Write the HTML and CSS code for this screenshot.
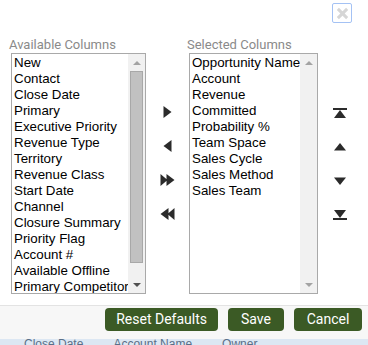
FILE: index.html
```html
<!DOCTYPE html>
<html lang="en">
<head>
  <meta charset="UTF-8">
  <title>Column Chooser</title>
  <link rel="stylesheet" href="styles.css">
</head>
<body>

<div class="dialog">
  <div class="dialog-top">
    <button class="close-btn" title="Close">
      <svg viewBox="0 0 14 14"><path d="M2 2L12 12M12 2L2 12"/></svg>
    </button>
  </div>

  <div class="chooser">
    <div class="col">
      <div class="col-label">Available Columns</div>
      <div class="listbox">
        <ul class="items">
          <li>New</li>
          <li>Contact</li>
          <li>Close Date</li>
          <li>Primary</li>
          <li>Executive Priority</li>
          <li>Revenue Type</li>
          <li>Territory</li>
          <li>Revenue Class</li>
          <li>Start Date</li>
          <li>Channel</li>
          <li>Closure Summary</li>
          <li>Priority Flag</li>
          <li>Account #</li>
          <li>Available Offline</li>
          <li>Primary Competitor</li>
        </ul>
        <div class="scrollbar">
          <div class="sb-btn"><span class="sb-up"></span></div>
          <div class="sb-track"><div class="sb-thumb"></div></div>
          <div class="sb-btn"><span class="sb-down"></span></div>
        </div>
      </div>
    </div>

    <div class="moves">
      <button class="icon-btn" title="Add">
        <svg class="tri" viewBox="0 0 9 12"><path d="M0.5 0L8.5 6L0.5 12Z"/></svg>
      </button>
      <button class="icon-btn" title="Remove">
        <svg class="tri" viewBox="0 0 9 12"><path d="M8.5 0L0.5 6L8.5 12Z"/></svg>
      </button>
      <button class="icon-btn" title="Add all">
        <svg class="dbl" viewBox="0 0 15 12"><path d="M0.5 0L7.5 6L0.5 12ZM6.5 0L14.5 6L6.5 12Z"/></svg>
      </button>
      <button class="icon-btn" title="Remove all">
        <svg class="dbl" viewBox="0 0 15 12"><path d="M14.5 0L7.5 6L14.5 12ZM8.5 0L0.5 6L8.5 12Z"/></svg>
      </button>
    </div>

    <div class="col">
      <div class="col-label">Selected Columns</div>
      <div class="listbox">
        <ul class="items">
          <li>Opportunity Name</li>
          <li>Account</li>
          <li>Revenue</li>
          <li>Committed</li>
          <li>Probability %</li>
          <li>Team Space</li>
          <li>Sales Cycle</li>
          <li>Sales Method</li>
          <li>Sales Team</li>
        </ul>
        <div class="scrollbar disabled">
          <div class="sb-btn"><span class="sb-up"></span></div>
          <div class="sb-track"></div>
          <div class="sb-btn"><span class="sb-down"></span></div>
        </div>
      </div>
    </div>

    <div class="moves order">
      <button class="icon-btn" title="Move to top">
        <svg class="bar" viewBox="0 0 14 10"><path d="M0 0H14V2H0ZM7 2L13 10H1Z"/></svg>
      </button>
      <button class="icon-btn" title="Move up">
        <svg class="bar" viewBox="0 0 14 10"><path d="M7 1L13 8.5H1Z"/></svg>
      </button>
      <button class="icon-btn" title="Move down">
        <svg class="bar" viewBox="0 0 14 10"><path d="M1 1.5H13L7 9Z"/></svg>
      </button>
      <button class="icon-btn" title="Move to bottom">
        <svg class="bar" viewBox="0 0 14 10"><path d="M1 0H13L7 8Z M0 8H14V10H0Z"/></svg>
      </button>
    </div>
  </div>

  <div class="dialog-footer">
    <button class="btn">Reset Defaults</button>
    <button class="btn">Save</button>
    <button class="btn">Cancel</button>
  </div>
</div>

<div class="behind">
  <span>Close Date</span><span>Account Name</span><span>Owner</span>
</div>

</body>
</html>
```

FILE: styles.css
```css
* {
  box-sizing: border-box;
}

body {
  margin: 0;
  width: 368px;
  height: 345px;
  overflow: hidden;
  background: #ffffff;
  font-family: Roboto, "Liberation Sans", Arial, sans-serif;
}

.dialog {
  background: #ffffff;
}

.dialog-top {
  height: 37px;
  display: flex;
  justify-content: flex-end;
  padding: 3px 16px 0 0;
}

.close-btn {
  width: 20px;
  height: 20px;
  padding: 0;
  border: 1px solid #a4c2f4;
  border-radius: 2px;
  background: #ffffff;
  display: grid;
  place-content: center;
}

.close-btn svg {
  width: 13px;
  height: 13px;
  stroke: #d6d6d6;
  stroke-width: 3.2;
  fill: none;
}

.chooser {
  display: grid;
  grid-template-columns: 135px 43px 129px 50px;
  padding-left: 11px;
}

.col-label {
  font-size: 13px;
  color: #8a8a8a;
  height: 16px;
  line-height: 15px;
  margin-left: -2px;
  white-space: nowrap;
}

.listbox {
  height: 241px;
  border: 1px solid #a9a9a9;
  display: flex;
  background: #ffffff;
}

.items {
  flex: 1;
  list-style: none;
  margin: 0;
  padding: 1px 0 0 2px;
  font-family: "Liberation Sans", Arial, sans-serif;
  font-size: 13.33px;
  line-height: 16px;
  color: #000000;
  overflow: hidden;
  white-space: nowrap;
}

.scrollbar {
  width: 17px;
  display: flex;
  flex-direction: column;
  background: #f1f1f1;
}

.sb-btn {
  height: 17px;
  display: grid;
  place-content: center;
}

.sb-up,
.sb-down {
  width: 0;
  height: 0;
  border-left: 4px solid transparent;
  border-right: 4px solid transparent;
}

.sb-up {
  border-bottom: 4px solid #a3a3a3;
}

.sb-down {
  border-top: 4px solid #505050;
}

.sb-track {
  flex: 1;
  padding: 0 2px;
}

.sb-thumb {
  height: 192px;
  background: #c1c1c1;
  border: 1px solid #a8a8a8;
}

.scrollbar.disabled .sb-down {
  border-top-color: #a3a3a3;
}

.moves {
  padding-top: 69px;
  display: flex;
  flex-direction: column;
  align-items: center;
  gap: 22px;
}

.moves.order {
  padding-top: 71px;
  padding-right: 6px;
  gap: 24px;
}

.icon-btn {
  width: 16px;
  height: 12px;
  padding: 0;
  border: none;
  background: none;
  display: grid;
  place-content: center;
}

.icon-btn svg {
  fill: #2b2b2b;
  display: block;
}

.tri {
  width: 9px;
  height: 12px;
}

.dbl {
  width: 15px;
  height: 12px;
}

.order .icon-btn {
  height: 10px;
}

.bar {
  width: 14px;
  height: 10px;
}

.dialog-footer {
  margin-top: 11px;
  height: 34px;
  border-top: 1px solid #e3e3e3;
  background: #f7f7f7;
  display: flex;
  justify-content: flex-end;
  align-items: flex-start;
  gap: 10px;
  padding: 2px 6px 0 0;
}

.btn {
  height: 23px;
  padding: 0 11px;
  border: none;
  border-radius: 4px;
  background: #3b5a25;
  color: #ffffff;
  font-family: Roboto, "Liberation Sans", Arial, sans-serif;
  font-size: 14px;
  line-height: 23px;
}

.dialog-footer .btn:nth-child(2) {
  width: 56px;
}

.dialog-footer .btn:nth-child(3) {
  width: 68px;
}

.behind {
  height: 6px;
  background: #dce7f3;
  overflow: hidden;
  display: flex;
  gap: 30px;
  padding-left: 24px;
  font-family: "Liberation Sans", Arial, sans-serif;
  font-size: 12px;
  line-height: 10px;
  color: #5a6f88;
}
```
